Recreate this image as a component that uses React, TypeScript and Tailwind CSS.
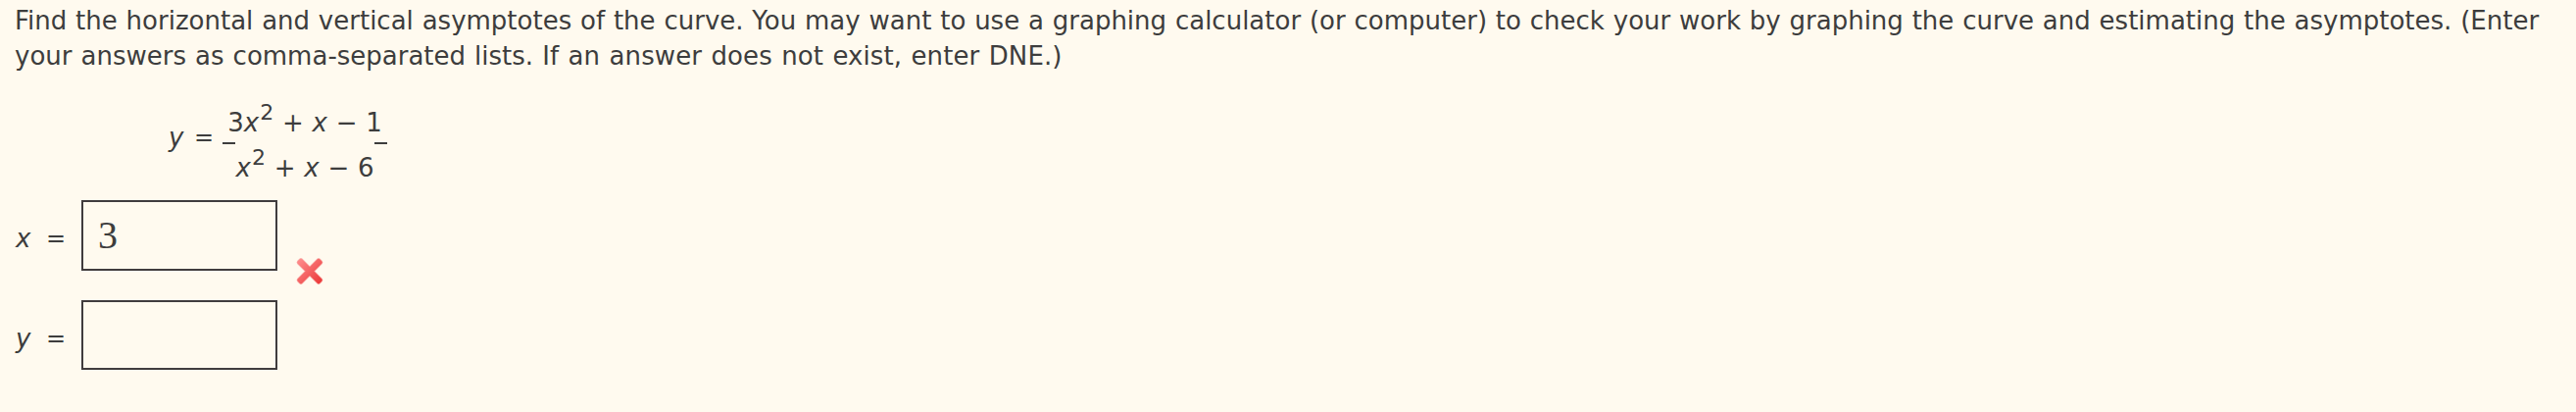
import React from "react";

const Sup = () => (
  <sup className="relative -top-[12px] ml-[1px] align-baseline text-[22px] leading-none">2</sup>
);

const WrongMark = () => (
  <svg className="mt-[57px] ml-[18px] h-[30px] w-[30px]" viewBox="0 0 30 30" fill="none">
    <defs>
      <linearGradient id="wrong" x1="3" y1="3" x2="28" y2="28" gradientUnits="userSpaceOnUse">
        <stop stopColor="#ff8e8e" />
        <stop offset="0.5" stopColor="#f46262" />
        <stop offset="1" stopColor="#ea3434" />
      </linearGradient>
    </defs>
    <g strokeLinejoin="round">
      <path d="M6 4.5L15 13.5L24 4.5L26 6.5L17 15.5L26 24.5L24 26.5L15 17.5L6 26.5L4 24.5L13 15.5L4 6.5Z" stroke="#f9b0ab" strokeWidth="4.6" />
      <path d="M6 4.5L15 13.5L24 4.5L26 6.5L17 15.5L26 24.5L24 26.5L15 17.5L6 26.5L4 24.5L13 15.5L4 6.5Z" fill="url(#wrong)" stroke="url(#wrong)" strokeWidth="3.4" />
    </g>
  </svg>
);

const Fraction = () => (
  <div className="flex h-[92px] items-start pt-[10px] pl-[157px] text-[26px] leading-9 whitespace-pre">
    <span className="mt-[16px] w-[26px] italic">y</span>
    <span className="mt-[16px] w-[29px] text-[24px]">=</span>
    <span className="mt-[39px] h-[2px] w-[13px] bg-[#3d3d3d]" />
    <div className="-mx-[13px] flex w-[168px] flex-col items-center [word-spacing:0.5px]">
      <div className="h-[46px] pt-[1px]">
        3<i>x</i><Sup /> + <i>x</i> − 1
      </div>
      <div className="h-[46px] pt-[1px]">
        <i>x</i><Sup /> + <i>x</i> − 6
      </div>
    </div>
    <span className="mt-[39px] h-[2px] w-[13px] bg-[#3d3d3d]" />
  </div>
);

interface AnswerRowProps {
  name: string;
  value?: string;
  wrong?: boolean;
}

const AnswerRow = ({ name, value, wrong }: AnswerRowProps) => (
  <div className="flex h-[72px] items-start last:h-[71px]">
    <span className="mt-[21px] w-[32px] pl-[1px] text-[26px] leading-9 italic">{name}</span>
    <span className="mt-[21px] w-[36px] text-[24px] leading-9">=</span>
    <div className="flex h-full w-[200px] items-center border-2 border-[#403c3e] pl-[15px] font-['Liberation_Serif',serif] text-[40px] leading-none">
      {value}
    </div>
    {wrong && <WrongMark />}
  </div>
);

const App = () => {
  return (
    <main className="h-[420px] w-full overflow-hidden bg-[#fffaef] pt-[3px] pl-[15px] font-['DejaVu_Sans',sans-serif] text-[#3d3d3d]">
      <p className="text-[26px] leading-9 whitespace-nowrap">
        <span className="[word-spacing:0.57px]">
          Find the horizontal and vertical asymptotes of the curve. You may want to use a graphing calculator (or computer) to check your work by graphing the curve and estimating the asymptotes. (Enter
        </span>
        <br />
        <span className="[word-spacing:0.8px]">your answers as comma-separated lists. </span>
        <span className="tracking-[0.1px] [word-spacing:1px]">If an answer does not exist, enter DNE.)</span>
      </p>
      <div className="mt-[21px]">
        <Fraction />
      </div>
      <div className="mt-[16px] flex flex-col gap-[30px]">
        <AnswerRow name="x" value="3" wrong />
        <AnswerRow name="y" />
      </div>
    </main>
  );
};

export default App;
